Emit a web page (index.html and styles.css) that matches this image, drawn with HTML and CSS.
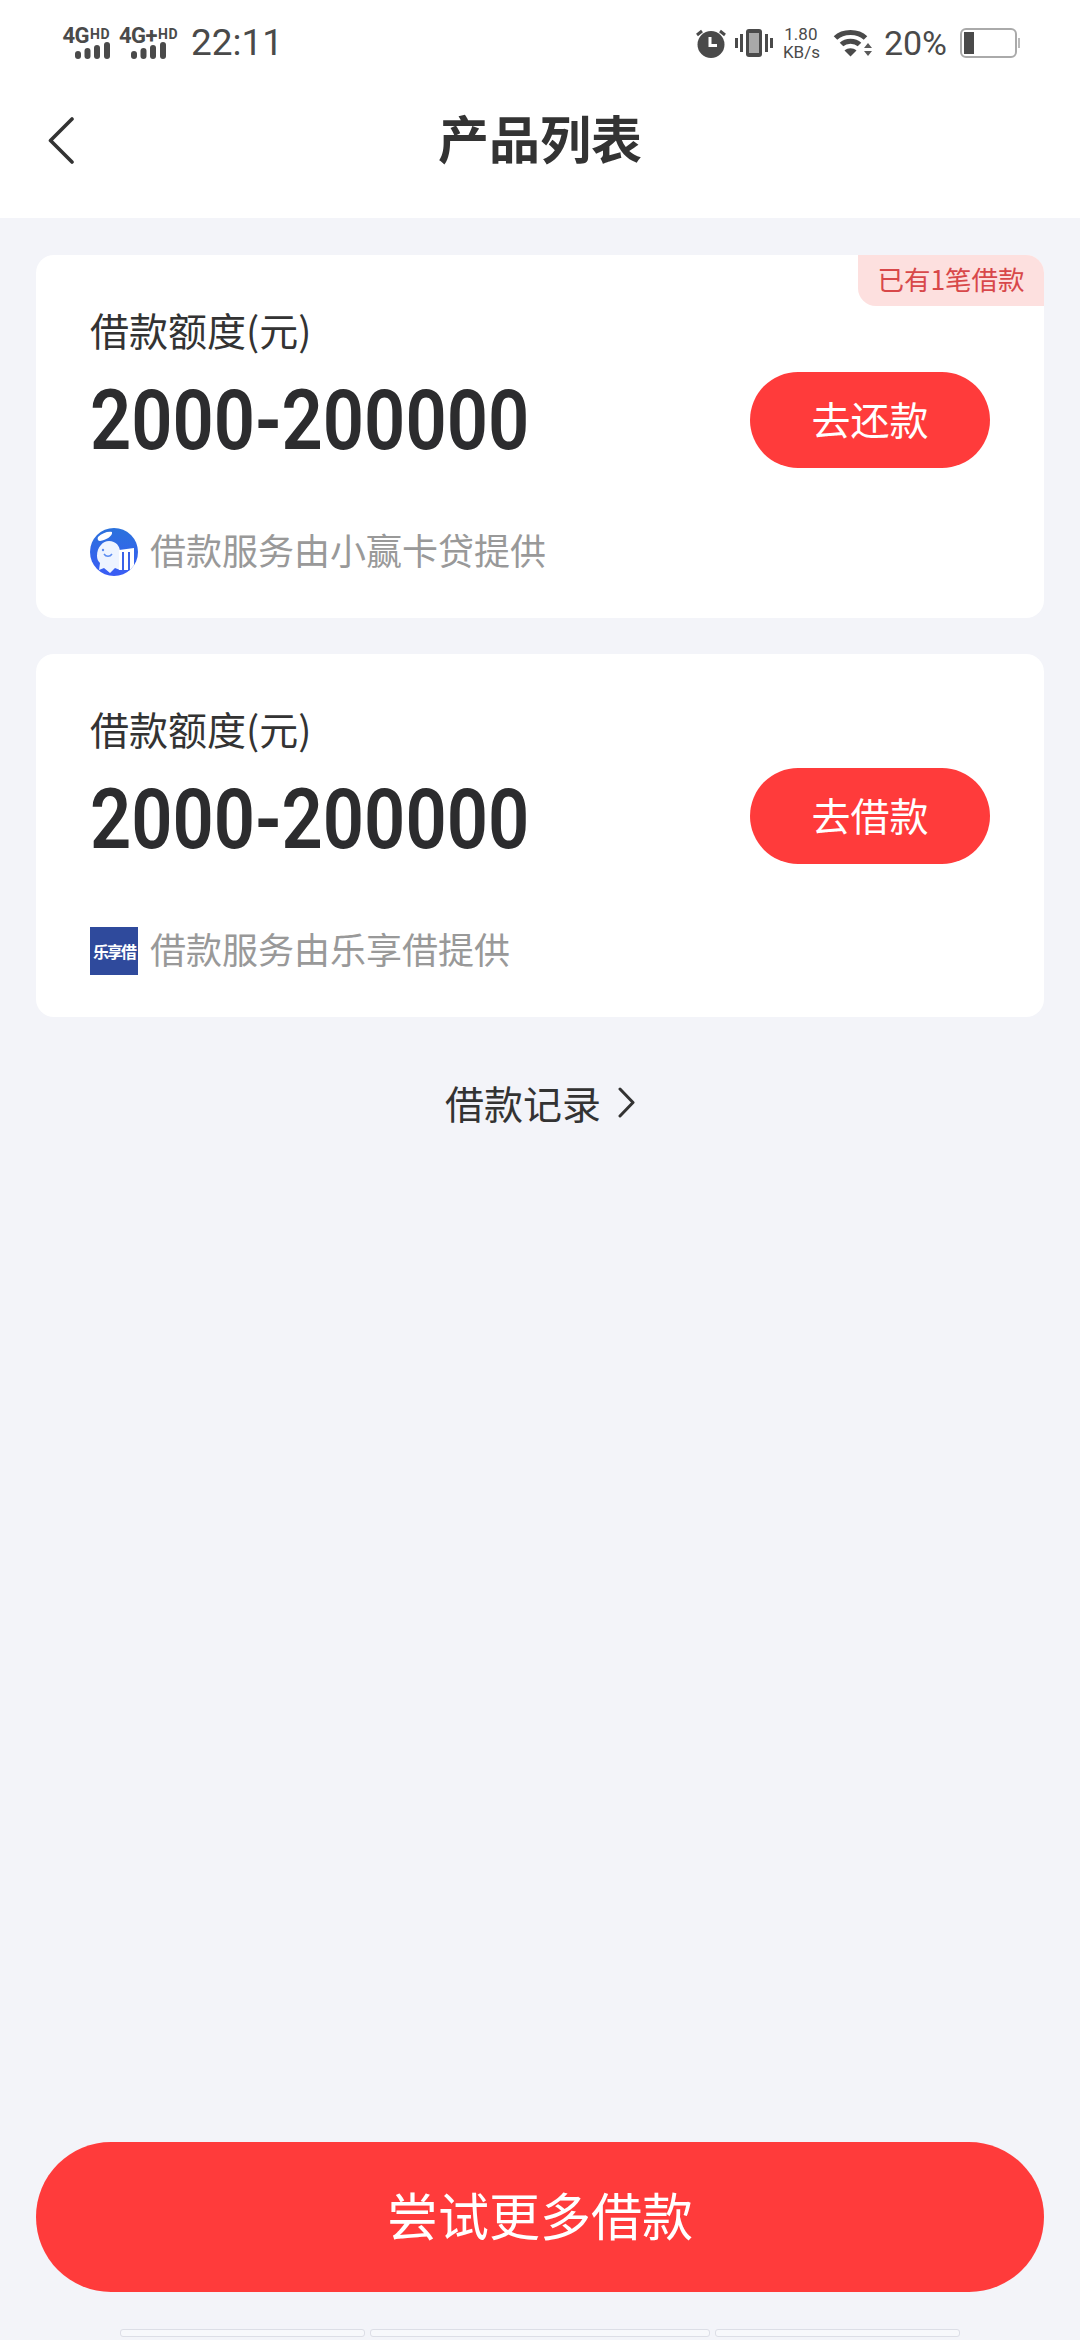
FILE: index.html
```html
<!DOCTYPE html>
<html lang="zh-CN">
<head>
<meta charset="utf-8">
<title>产品列表</title>
<link rel="stylesheet" href="styles.css">
</head>
<body>
<div class="page">
  <header class="top">
    <div class="status">
      <div class="status-left">
        <div class="net">
          <div class="net-label"><span class="net-g">4G</span><span class="net-hd">HD</span></div>
          <svg class="signal" width="35" height="17" viewBox="0 0 35 17"><rect x="0" y="9" width="6" height="8" rx="3"/><rect x="9.500" y="6" width="6" height="11" rx="3"/><rect x="19" y="3" width="6" height="14" rx="3"/><rect x="29" y="0" width="6" height="17" rx="3"/></svg>
        </div>
        <div class="net net-second">
          <div class="net-label"><span class="net-g">4G+</span><span class="net-hd">HD</span></div>
          <svg class="signal" width="35" height="17" viewBox="0 0 35 17"><rect x="0" y="9" width="6" height="8" rx="3"/><rect x="9.500" y="6" width="6" height="11" rx="3"/><rect x="19" y="3" width="6" height="14" rx="3"/><rect x="29" y="0" width="6" height="17" rx="3"/></svg>
        </div>
        <span class="clock">22:11</span>
      </div>
      <div class="status-right">
        <svg class="ico-alarm" width="30" height="30" viewBox="0 0 30 30"><circle cx="15" cy="16.500" r="13.500" fill="#4a4a4a"/><path d="M1 7 L6 3 M29 7 L24 3" stroke="#4a4a4a" stroke-width="3"/><path d="M14 9 V17.500 H21" fill="none" stroke="#fff" stroke-width="3"/></svg>
        <svg class="ico-vib" width="38" height="28" viewBox="0 0 38 28"><rect x="0" y="9" width="3" height="10" fill="#4a4a4a"/><rect x="5" y="5" width="3" height="18" fill="#4a4a4a"/><rect x="30" y="5" width="3" height="18" fill="#4a4a4a"/><rect x="35" y="9" width="3" height="10" fill="#4a4a4a"/><rect x="11" y="0" width="16" height="28" rx="3" fill="#4a4a4a"/><rect x="14" y="4" width="10" height="20" fill="#a9a9a9"/></svg>
        <div class="speed"><span>1.80</span><span>KB/s</span></div>
        <svg class="ico-wifi" width="39" height="28" viewBox="0 0 39 28"><path d="M2.500 9 C10 1.500 25 1.500 32.500 9" fill="none" stroke="#4a4a4a" stroke-width="5"/><path d="M8.500 15.500 C13 11 22 11 26.500 15.500" fill="none" stroke="#4a4a4a" stroke-width="5"/><path d="M11.500 21.500 C15 18.500 20 18.500 23.500 21.500 L17.500 27.500 Z" fill="#4a4a4a"/><path d="M31 19 L35 14 L39 19 Z M31 22 H39 L35 27 Z" fill="#5a5a5a"/></svg>
        <span class="pct">20%</span>
        <svg class="ico-bat" width="61" height="30" viewBox="0 0 61 30"><rect x="1" y="1" width="55" height="28" rx="5" fill="none" stroke="#aaa" stroke-width="2"/><rect x="4" y="4" width="10" height="22" fill="#4a4a4a"/><rect x="58" y="10" width="2" height="10" fill="#bbb"/></svg>
      </div>
    </div>
    <nav class="nav">
      <svg class="back" width="26" height="47" viewBox="0 0 26 47"><path d="M24 2 L2.500 23.500 L24 45" fill="none" stroke="#333" stroke-width="3.600" stroke-linecap="round" stroke-linejoin="round"/></svg>
      <h1 class="title">产品列表</h1>
    </nav>
  </header>

  <main class="list">
    <section class="card">
      <span class="tag">已有1笔借款</span>
      <div class="label">借款额度(元)</div>
      <div class="row">
        <div class="amount">2000-200000</div>
        <button class="btn">去还款</button>
      </div>
      <div class="provider">
        <svg class="logo" width="48" height="48" viewBox="0 0 48 48">
          <defs>
            <linearGradient id="lg" x1="0" y1="0" x2="0" y2="1"><stop offset="0" stop-color="#2b72dc"/><stop offset="1" stop-color="#3a5cf5"/></linearGradient>
            <clipPath id="disc"><circle cx="24" cy="24" r="24"/></clipPath>
          </defs>
          <circle cx="24" cy="24" r="24" fill="url(#lg)"/>
          <g clip-path="url(#disc)">
            <path d="M8 9 C12 5 18 3 22 4 C23 8 16 12 10 13 C8 13 7 11 8 9 Z" fill="#fff"/>
            <path d="M7 28 C7 19 13 13 19 13 C26 13 30 18 30 24 V42 L25 40 L20 45 L14 40 L9 42 L10 35 C8 33 7 31 7 28 Z" fill="#eef4ff"/>
            <path d="M14 26 C16 29 20 29 22 26" fill="none" stroke="#5b8cf0" stroke-width="1.500"/>
            <circle cx="13" cy="22" r="1.200" fill="#5b8cf0"/>
            <path d="M29 22 L44 20 V42 H29 Z" fill="#fff"/>
            <path d="M33 24 V43 M39 24 V43" stroke="#3a62e8" stroke-width="2"/>
          </g>
        </svg>
        <span class="provider-text">借款服务由小赢卡贷提供</span>
      </div>
    </section>

    <section class="card card-second">
      <div class="label">借款额度(元)</div>
      <div class="row">
        <div class="amount">2000-200000</div>
        <button class="btn">去借款</button>
      </div>
      <div class="provider">
        <div class="logo-square"><span>乐享借</span></div>
        <span class="provider-text">借款服务由乐享借提供</span>
      </div>
    </section>

    <a class="record">
      <span class="record-text">借款记录</span>
      <svg width="17" height="31" viewBox="0 0 17 31"><path d="M2 2 L15 15.500 L2 29" fill="none" stroke="#333" stroke-width="3" stroke-linecap="round" stroke-linejoin="round"/></svg>
    </a>
  </main>

  <div class="cta-wrap"><button class="cta">尝试更多借款</button></div>
  <div class="stubs"><i class="stub stub-a"></i><i class="stub stub-b"></i><i class="stub stub-a"></i></div>
</div>
</body>
</html>
```
FILE: styles.css
```css
* { box-sizing: border-box; margin: 0; padding: 0; }
html, body { width: 1080px; height: 2340px; overflow: hidden; }
body {
  background: #f3f4f9;
  font-family: "Noto Sans CJK SC", "Noto Sans", sans-serif;
  color: #333;
}
.page { height: 2340px; display: flex; flex-direction: column; }

.top { background: #fff; height: 218px; flex: none; }
.status {
  height: 64px;
  padding: 22px 59px 0 63px;
  display: flex;
  justify-content: space-between;
  align-items: center;
  color: #4a4a4a;
}
.status-left, .status-right { display: flex; align-items: center; }
.net { display: flex; flex-direction: column; align-items: flex-end; width: 47px; }
.net-second { width: 58px; margin-left: 10px; }
.net-second .signal { margin-right: 12px; }
.net-label { display: flex; align-items: flex-start; height: 15px; font-family: "Roboto", sans-serif; font-weight: 700; line-height: 18px; white-space: nowrap; }
.net-g { font-size: 22px; letter-spacing: -0.5px; }
.net-hd { font-size: 14px; line-height: 14px; letter-spacing: 0.5px; margin-left: 1px; }
.signal { fill: #4a4a4a; }
.clock { font-family: "Roboto", sans-serif; font-size: 37px; line-height: 40px; margin-left: 13px; }
.ico-alarm { margin-right: 9px; }
.ico-vib { margin-right: 10px; }
.speed { display: flex; flex-direction: column; font-family: "Roboto", sans-serif; font-size: 17px; line-height: 18px; text-align: center; width: 36px; margin-right: 14px; }
.ico-wifi { margin-right: 12px; }
.pct { font-family: "Roboto", sans-serif; font-size: 34px; line-height: 40px; margin-right: 13px; }

.nav {
  height: 154px;
  display: grid;
  grid-template-columns: 1fr auto 1fr;
  align-items: center;
  padding: 0 48px;
}
.back { justify-self: start; margin-top: -2px; }
.title { font-size: 51px; font-weight: 700; line-height: 70px; padding-bottom: 8px; color: #333; grid-column: 2; }

.list { flex: 1; padding: 37px 36px 0; display: flex; flex-direction: column; gap: 36px; }
.card {
  position: relative;
  background: #fff;
  border-radius: 18px;
  padding: 49px 54px 42px;
  height: 363px;
}
.tag {
  position: absolute;
  top: 0;
  right: 0;
  width: 186px;
  height: 51px;
  background: #fde0df;
  color: #d8484a;
  font-size: 26.500px;
  line-height: 48px;
  text-align: center;
  border-radius: 0 18px 0 18px;
}
.label { font-size: 39px; line-height: 50px; color: #333; }
.row { display: flex; align-items: center; justify-content: space-between; margin-top: 18px; height: 96px; }
.amount {
  font-family: "Roboto", sans-serif;
  font-weight: 600;
  font-size: 84px;
  line-height: 96px;
  padding-top: 1px;
  color: #2c2c2e;
  transform: scaleX(0.86);
  transform-origin: left center;
  white-space: nowrap;
}
.btn {
  flex: none;
  width: 240px;
  height: 96px;
  border: 0;
  border-radius: 48px;
  background: #ff3b3b;
  color: #fff;
  font: inherit;
  font-size: 39px;
  padding-bottom: 4px;
}
.card-second .btn { margin-bottom: 6px; }
.provider { display: flex; align-items: center; gap: 12px; margin-top: 60px; height: 48px; }
.logo { flex: none; }
.logo-square {
  flex: none;
  width: 48px;
  height: 48px;
  background: #2f4a9c;
  color: #fff;
  display: flex;
  align-items: center;
  justify-content: center;
  font-size: 16px;
  letter-spacing: -2px;
  font-weight: 700;
  white-space: nowrap;
}
.provider-text { font-size: 36px; line-height: 48px; padding-bottom: 6px; color: #999; white-space: nowrap; }

.record {
  display: flex;
  align-items: center;
  justify-content: center;
  gap: 17px;
  font-size: 39px;
  line-height: 50px;
  color: #333;
  margin-top: 24px;
}

.cta-wrap { padding: 0 36px; flex: none; }
.cta {
  display: block;
  width: 100%;
  height: 150px;
  border: 0;
  border-radius: 75px;
  background: #ff3b3b;
  color: #fff;
  font: inherit;
  font-size: 51px;
  padding-bottom: 6px;
}
.stubs { flex: none; display: flex; justify-content: center; gap: 5px; margin-top: 37px; margin-bottom: 3px; }
.stub { display: block; height: 8px; background: #f7f8fb; border: 1px solid #dcdee6; border-radius: 3px; }
.stub-a { width: 245px; }
.stub-b { width: 340px; }
```
